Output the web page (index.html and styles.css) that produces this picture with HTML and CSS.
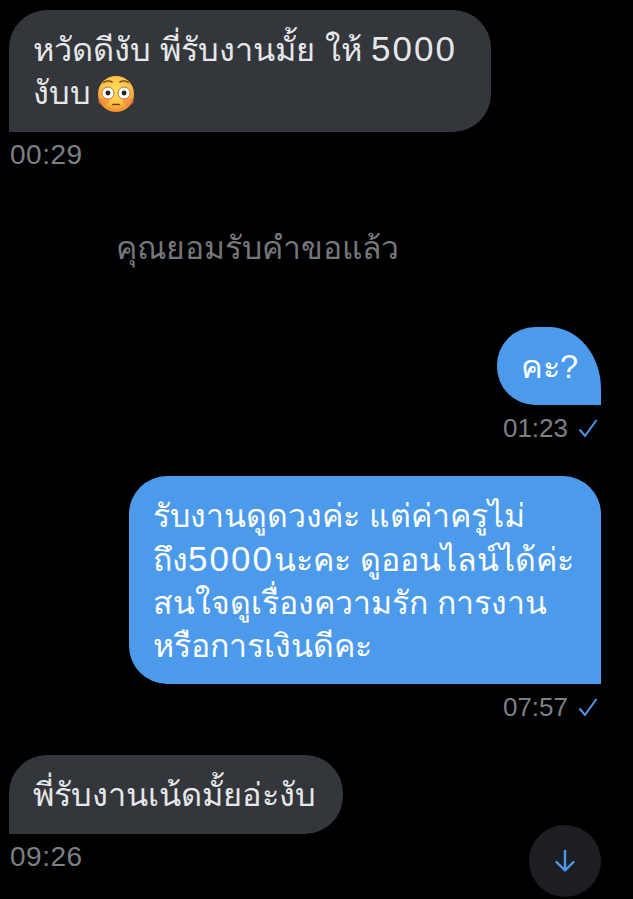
FILE: index.html
```html
<!DOCTYPE html>
<html lang="th">
<head>
    <meta charset="UTF-8">
    <meta name="viewport" content="width=device-width, initial-scale=1.0">
    <title>ข้อความ</title>
    <link rel="stylesheet" href="styles.css">
</head>
<body>
    <div class="chat">
        <div class="msg in first">
            <div class="bubble wide">หวัดดีงับ พี่รับงานมั้ย<span class="gap"></span>ให้ <span class="num">5000</span> งับบ<svg class="emoji" viewBox="0 0 40 40" aria-hidden="true">
                <defs>
                    <radialGradient id="face" cx="50%" cy="38%" r="62%">
                        <stop offset="0%" stop-color="#ffdc5e"/>
                        <stop offset="65%" stop-color="#fdc044"/>
                        <stop offset="100%" stop-color="#f08a2c"/>
                    </radialGradient>
                </defs>
                <circle cx="20" cy="20" r="19" fill="url(#face)"/>
                <ellipse cx="7" cy="28" rx="6" ry="4" fill="#f0703c" opacity="0.45"/>
                <ellipse cx="33" cy="28" rx="6" ry="4" fill="#f0703c" opacity="0.45"/>
                <path d="M7 8q4.500-3.500 9-.5M24 7.500q4.500-3 9 .5" fill="none" stroke="#6b3d12" stroke-width="1.300" stroke-linecap="round"/>
                <circle cx="11.500" cy="19" r="6.300" fill="#fff" stroke="#7a4c18" stroke-width="0.700"/>
                <circle cx="28.500" cy="19" r="6.300" fill="#fff" stroke="#7a4c18" stroke-width="0.700"/>
                <circle cx="11.500" cy="19" r="2.600" fill="#2b2320"/>
                <circle cx="28.500" cy="19" r="2.600" fill="#2b2320"/>
                <path d="M16.500 31h7" stroke="#6b3d12" stroke-width="1.600" stroke-linecap="round"/>
            </svg></div>
            <div class="time">00:29</div>
        </div>

        <div class="notice">คุณยอมรับคำขอแล้ว</div>

        <div class="msg out short">
            <div class="bubble">คะ?</div>
            <div class="time">01:23
                <svg class="check" viewBox="0 0 20 20" aria-hidden="true"><path d="M1.500 11.500l5.500 6.500 11.500-16"/></svg>
            </div>
        </div>

        <div class="msg out long">
            <div class="bubble">รับงานดูดวงค่ะ แต่ค่าครูไม่<br>ถึง<span class="num">5000</span>นะคะ ดูออนไลน์ได้ค่ะ<br>สนใจดูเรื่องความรัก การงาน<br>หรือการเงินดีคะ</div>
            <div class="time">07:57
                <svg class="check" viewBox="0 0 20 20" aria-hidden="true"><path d="M1.500 11.500l5.500 6.500 11.500-16"/></svg>
            </div>
        </div>

        <div class="msg in last">
            <div class="bubble">พี่รับงานเน้ดมั้ยอ่ะงับ</div>
            <div class="time">09:26</div>
        </div>
    </div>

    <button class="scroll-btn" aria-label="เลื่อนลง">
        <svg viewBox="0 0 24 24" aria-hidden="true"><path d="M12 2v19M3.500 13l8.500 8.500 8.500-8.500"/></svg>
    </button>
</body>
</html>
```

FILE: styles.css
```css
* {
    margin: 0;
    padding: 0;
    box-sizing: border-box;
}

body {
    background: #000;
    font-family: "Liberation Sans", "Noto Sans", "DejaVu Sans", sans-serif;
    height: 899px;
    overflow: hidden;
    position: relative;
}

.chat {
    display: flex;
    flex-direction: column;
    padding: 10px 32px 0 9px;
}

.msg {
    display: flex;
    flex-direction: column;
}

.msg.in {
    align-items: flex-start;
}

.msg.out {
    align-items: flex-end;
}

.bubble {
    font-size: 32.5px;
    line-height: 43.25px;
    padding: 19px 24px 16px;
    border-radius: 38px;
}

.num {
    font-size: 35px;
    line-height: 30px;
    letter-spacing: 2px;
}

.gap {
    display: inline-block;
    width: 10px;
}

.in .bubble {
    background: #33363a;
    color: #e6e7e9;
    border-bottom-left-radius: 0;
}

.out .bubble {
    background: #4b9aeb;
    color: #fff;
    border-bottom-right-radius: 0;
}

.bubble.wide {
    width: 482px;
}

.long .bubble {
    width: 472px;
    font-size: 32px;
    white-space: nowrap;
}

.short .bubble {
    border-top-right-radius: 52px 62px;
    padding-right: 23px;
}

.last .bubble {
    padding-right: 27px;
}

.emoji {
    width: 38px;
    height: 38px;
    vertical-align: -9px;
    margin-left: 6px;
}

.time {
    display: flex;
    align-items: center;
    gap: 10px;
    color: #7c7f83;
    font-size: 26px;
    line-height: 30px;
    margin-top: 8px;
}

.in .time {
    font-size: 28px;
    letter-spacing: 0.5px;
    padding-left: 1px;
}

.check {
    width: 20px;
    height: 20px;
    fill: none;
    stroke: #4b9aeb;
    stroke-width: 2;
    margin-right: 3px;
}

.notice {
    color: #75777b;
    font-size: 31.8px;
    line-height: 44px;
    margin-top: 56px;
    padding-left: 107px;
}

.short {
    margin-top: 57.5px;
}

.long {
    margin-top: 33px;
}

.last {
    margin-top: 33px;
}

.scroll-btn {
    position: absolute;
    left: 529px;
    top: 825px;
    width: 72px;
    height: 72px;
    border: none;
    border-radius: 50%;
    background: #1c1e21;
    display: flex;
    align-items: center;
    justify-content: center;
}

.scroll-btn svg {
    width: 24px;
    height: 24px;
    fill: none;
    stroke: #4b9aeb;
    stroke-width: 2.4;
    stroke-linecap: round;
    stroke-linejoin: round;
}
```
